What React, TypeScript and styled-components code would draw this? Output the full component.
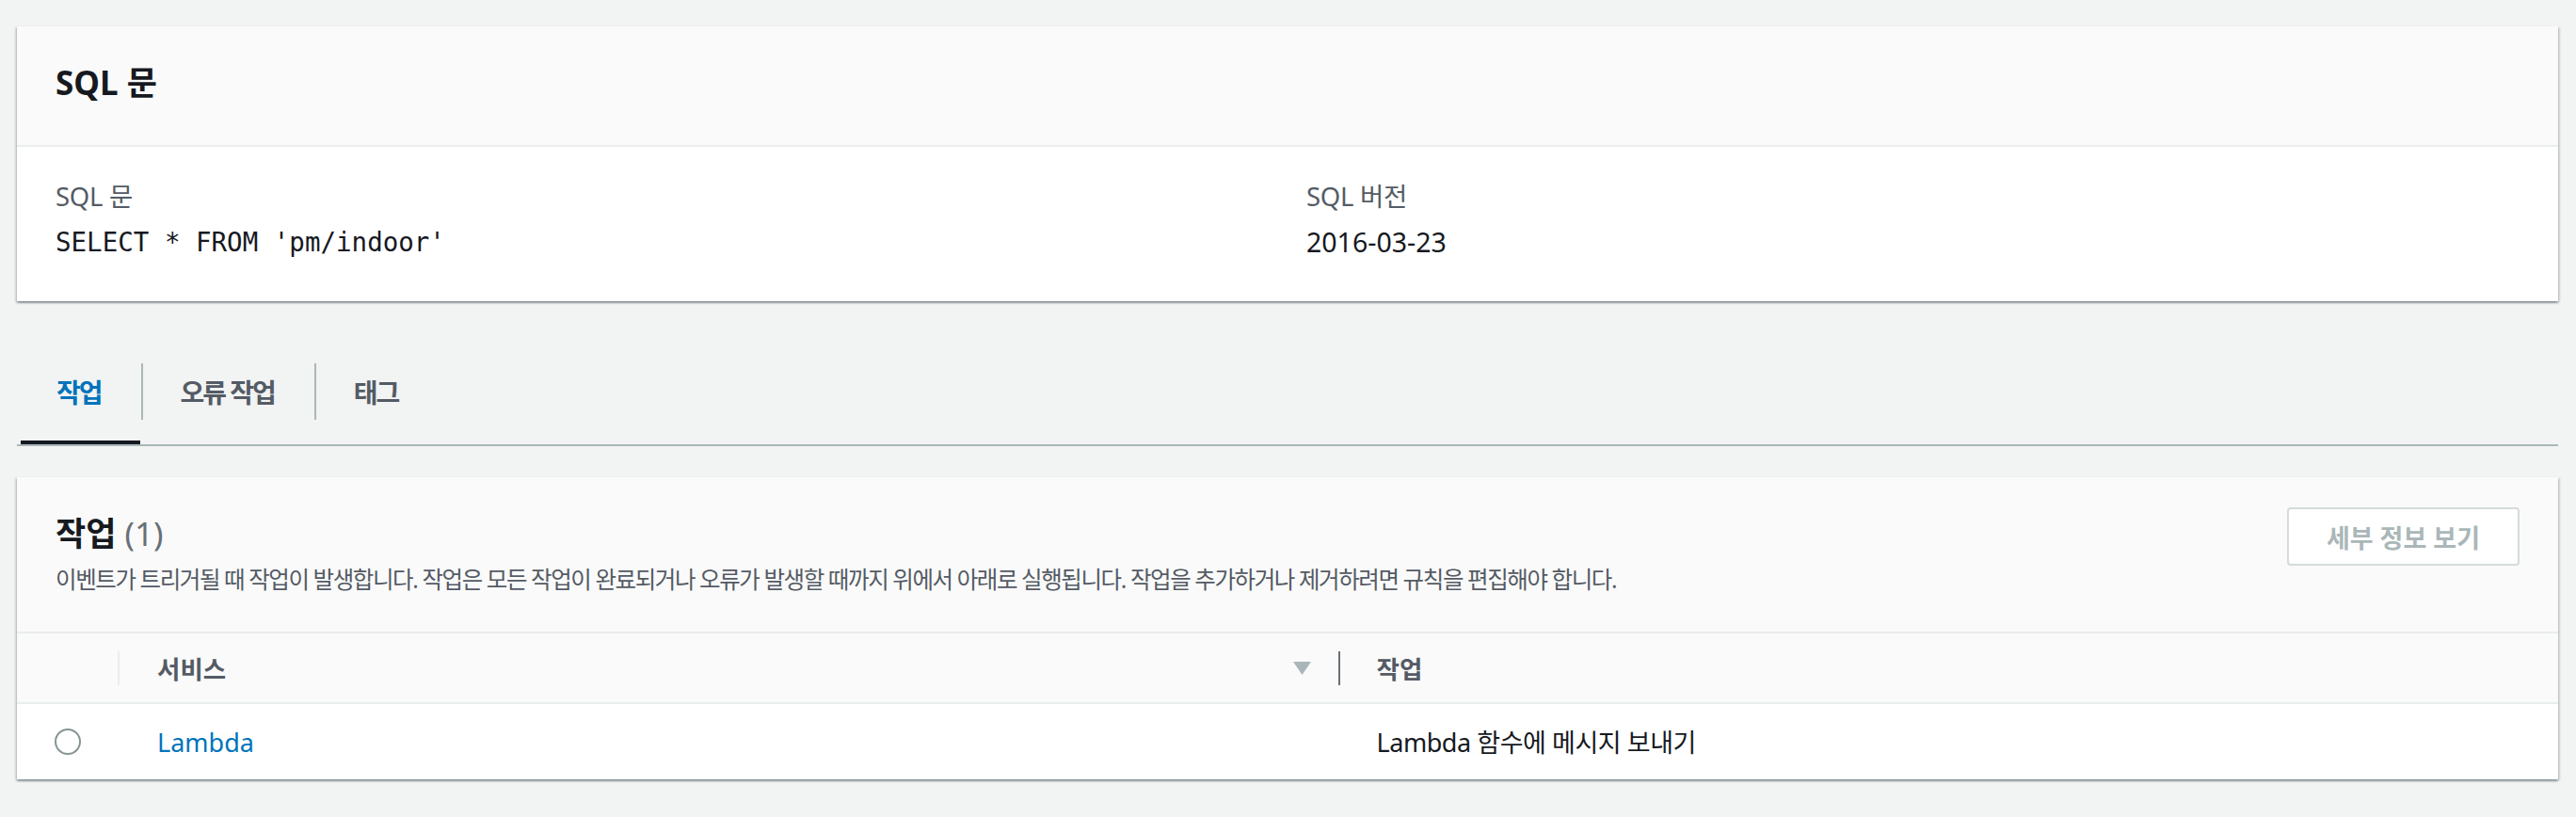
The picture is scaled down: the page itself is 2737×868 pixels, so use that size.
import React from "react";
import styled, { createGlobalStyle, css } from "styled-components";

const GlobalStyle = createGlobalStyle`
  html, body {
    margin: 0;
    padding: 0;
    background: #f2f3f3;
  }
  body {
    font-family: "Noto Sans", "Noto Sans CJK KR", sans-serif;
    font-feature-settings: "palt" 1;
    color: #16191f;
  }
  * { box-sizing: border-box; }
`;

const Page = styled.div`
  display: flex;
  flex-direction: column;
  padding: 28px 19px 38px 18px;
`;

const Card = styled.section<{ $gap?: number }>`
  background: #ffffff;
  margin-top: ${(p) => p.$gap ?? 0}px;
  box-shadow: 0 2px 2px 0 rgba(0, 28, 36, 0.35),
    2px 1px 2px 0 rgba(0, 28, 36, 0.12), -2px 1px 2px 0 rgba(0, 28, 36, 0.12);
`;

const SimpleHeader = styled.header`
  background: #fafafa;
  border-bottom: 2px solid #eaeded;
  padding: 40px 41px 46px;
`;

const Title = styled.h2`
  margin: 0;
  font-size: 35px;
  line-height: 40px;
  font-weight: 700;
  color: #16191f;
`;

const Count = styled.span`
  font-weight: 400;
  color: #687078;
`;

const DetailsGrid = styled.div`
  display: grid;
  grid-template-columns: 1fr 1fr;
  column-gap: 40px;
  padding: 35px 41px 45px;
`;

const Field = styled.div`
  display: flex;
  flex-direction: column;
  gap: 14px;
`;

const Label = styled.div`
  font-size: 27.5px;
  line-height: 35px;
  letter-spacing: -0.3px;
  color: #545b64;
`;

const Value = styled.div<{ $mono?: boolean }>`
  font-size: 28.5px;
  line-height: 35px;
  color: #16191f;
  ${(p) =>
    p.$mono &&
    css`
      font-family: "DejaVu Sans Mono", "Liberation Mono", monospace;
      font-size: 27.5px;
    `}
`;

const TabList = styled.nav`
  display: flex;
  margin-top: 40px;
  border-bottom: 2px solid #aab7b8;
`;

const Tab = styled.div<{ $active?: boolean; $first?: boolean }>`
  position: relative;
  height: 112px;
  padding: 0 42px;
  display: flex;
  align-items: center;
  font-size: 28px;
  font-weight: 700;
  letter-spacing: -2px;
  color: ${(p) => (p.$active ? "#0073bb" : "#545b64")};
  ${(p) =>
    !p.$first &&
    css`
      &::before {
        content: "";
        position: absolute;
        left: 0;
        top: 26px;
        width: 2px;
        height: 60px;
        background: #aab7b8;
      }
    `}
  ${(p) =>
    p.$active &&
    css`
      &::after {
        content: "";
        position: absolute;
        left: 4px;
        right: 1px;
        bottom: 0;
        height: 4px;
        background: #16191f;
      }
    `}
`;

const ActionsHeader = styled.header`
  display: flex;
  justify-content: space-between;
  align-items: flex-start;
  background: #fafafa;
  border-bottom: 2px solid #eaeded;
  padding: 32px 41px 38px;
`;

const HeadingBlock = styled.div`
  display: flex;
  flex-direction: column;
  gap: 11px;
  margin-top: 8px;
`;

const Description = styled.p`
  margin: 0;
  font-size: 24.5px;
  line-height: 35px;
  letter-spacing: -1.4px;
  color: #545b64;
`;

const Button = styled.button`
  height: 62px;
  padding: 0 40px;
  border: 2px solid #d5dbdb;
  border-radius: 4px;
  background: #ffffff;
  color: #aab7b8;
  font-family: inherit;
  font-feature-settings: inherit;
  font-size: 27px;
  font-weight: 700;
  cursor: default;
`;

const TableRow = styled.div<{ $head?: boolean }>`
  display: grid;
  grid-template-columns: 107px 1fr 1fr;
  align-items: center;
  height: ${(p) => (p.$head ? 75 : 80)}px;
  background: ${(p) => (p.$head ? "#fafafa" : "#ffffff")};
  border-bottom: ${(p) => (p.$head ? "2px solid #eaeded" : "none")};
`;

const HeadCell = styled.div<{ $divider?: string; $pad: number }>`
  display: flex;
  align-items: center;
  justify-content: space-between;
  height: 36px;
  padding: 0 29px 0 ${(p) => p.$pad}px;
  border-left: ${(p) => (p.$divider ? `2px solid ${p.$divider}` : "none")};
  font-size: 26.5px;
  font-weight: 700;
  color: #545b64;
`;

const Cell = styled.div<{ $pad: number; $tight?: boolean }>`
  display: flex;
  align-items: center;
  padding-left: ${(p) => p.$pad}px;
  font-size: 27px;
  line-height: 35px;
  letter-spacing: ${(p) => (p.$tight ? "-0.45px" : "0")};
  color: #16191f;
`;

const Radio = styled.span`
  display: block;
  width: 28px;
  height: 28px;
  border-radius: 50%;
  border: 2px solid #879596;
  background: #ffffff;
`;

const Link = styled.a`
  color: #0073bb;
  text-decoration: none;
`;

const SortCaret = () => (
  <svg width="19" height="14" viewBox="0 0 19 14" aria-hidden="true">
    <polygon points="0,0 19,0 9.5,14" fill="#aab7b8" />
  </svg>
);

export default function App() {
  return (
    <>
      <GlobalStyle />
      <Page>
        <Card>
          <SimpleHeader>
            <Title>SQL 문</Title>
          </SimpleHeader>
          <DetailsGrid>
            <Field>
              <Label>SQL 문</Label>
              <Value $mono>SELECT * FROM 'pm/indoor'</Value>
            </Field>
            <Field>
              <Label>SQL 버전</Label>
              <Value>2016-03-23</Value>
            </Field>
          </DetailsGrid>
        </Card>

        <TabList>
          <Tab $active $first>
            작업
          </Tab>
          <Tab>오류 작업</Tab>
          <Tab>태그</Tab>
        </TabList>

        <Card $gap={33}>
          <ActionsHeader>
            <HeadingBlock>
              <Title>
                작업 <Count>(1)</Count>
              </Title>
              <Description>
                이벤트가 트리거될 때 작업이 발생합니다. 작업은 모든 작업이 완료되거나 오류가 발생할 때까지 위에서 아래로
                실행됩니다. 작업을 추가하거나 제거하려면 규칙을 편집해야 합니다.
              </Description>
            </HeadingBlock>
            <Button type="button">세부 정보 보기</Button>
          </ActionsHeader>
          <TableRow $head>
            <div />
            <HeadCell $divider="#eaeded" $pad={40}>
              <span>서비스</span>
              <SortCaret />
            </HeadCell>
            <HeadCell $divider="#687078" $pad={39}>
              <span>작업</span>
            </HeadCell>
          </TableRow>
          <TableRow>
            <Cell $pad={40}>
              <Radio />
            </Cell>
            <Cell $pad={42}>
              <Link href="#">Lambda</Link>
            </Cell>
            <Cell $pad={41} $tight>
              Lambda 함수에 메시지 보내기
            </Cell>
          </TableRow>
        </Card>
      </Page>
    </>
  );
}
